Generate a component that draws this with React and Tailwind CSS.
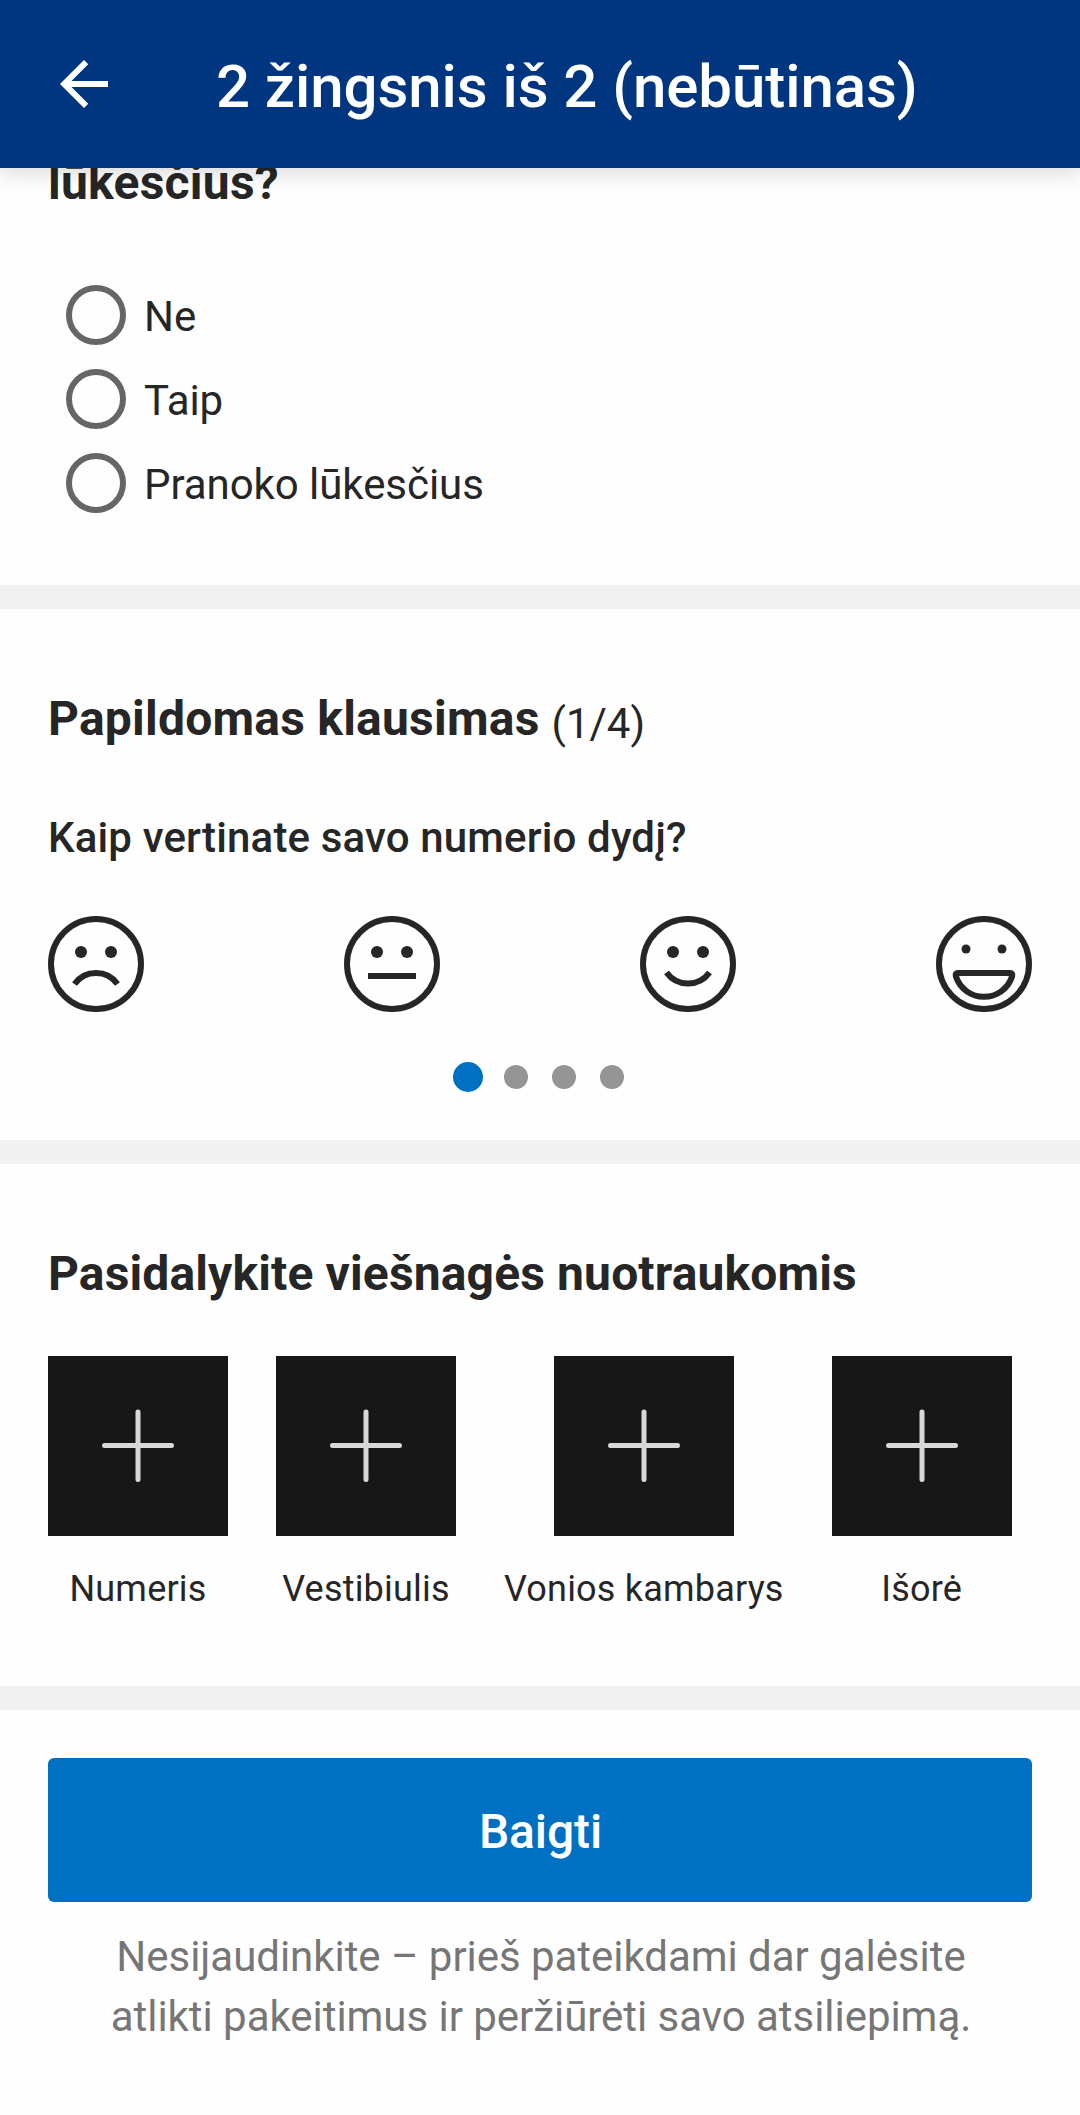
import { useState } from 'react';

const expectations = ['Ne', 'Taip', 'Pranoko lūkesčius'];

const photoSlots = ['Numeris', 'Vestibiulis', 'Vonios kambarys', 'Išorė'];

function Face({ children }) {
  return (
    <button className="block">
      <svg width="96" height="96" viewBox="0 0 96 96" fill="none" stroke="#262626" strokeWidth="6">
        <circle cx="48" cy="48" r="45" />
        {children}
      </svg>
    </button>
  );
}

function Eyes() {
  return (
    <g fill="#262626" stroke="none">
      <circle cx="33" cy="36" r="6" />
      <circle cx="63" cy="36" r="6" />
    </g>
  );
}

export default function App() {
  const [selected, setSelected] = useState(null);

  return (
    <div className="flex h-[2115px] w-[1080px] flex-col overflow-hidden bg-[#fefefe] font-['Roboto',sans-serif] text-[#262626]">
      <header className="z-10 flex h-[168px] shrink-0 items-center bg-[#003580] pl-12 text-white shadow-[0_4px_20px_rgba(0,0,0,0.16)]">
        <button>
          <svg width="72" height="72" viewBox="0 0 24 24" fill="currentColor">
            <path d="M20 11H7.83l5.59-5.59L12 4l-8 8 8 8 1.41-1.41L7.83 13H20v-2z" />
          </svg>
        </button>
        <h1 className="ml-24 pt-1.5 text-[60px] leading-[70px] font-medium tracking-[-0.07px]">2 žingsnis iš 2 (nebūtinas)</h1>
      </header>

      <section className="h-[417px] shrink-0 px-12">
        <h2 className="-mt-[13px] text-[48px] leading-[56px] font-bold tracking-[0.25px]">lūkesčius?</h2>
        <div className="mt-[62px] pl-[18px]">
          {expectations.map((label) => (
            <label key={label} className="flex h-[84px] items-center" onClick={() => setSelected(label)}>
              <span className="flex size-[60px] items-center justify-center rounded-full border-[6px] border-[#666666]">
                {selected === label && <span className="size-[30px] rounded-full bg-[#0071c2]" />}
              </span>
              <span className="ml-[18px] pt-[3px] text-[42px] leading-[50px] tracking-[-0.06px]">{label}</span>
            </label>
          ))}
        </div>
      </section>

      <div className="h-6 shrink-0 bg-[#f1f1f1]" />

      <section className="h-[531px] shrink-0 px-12 pt-[82px]">
        <div className="flex">
          <h2 className="text-[48px] leading-[56px] font-bold tracking-[0.23px]">Papildomas klausimas</h2>
          <span className="ml-3 pt-[8px] text-[42px] leading-[50px]">(1/4)</span>
        </div>
        <p className="mt-[64px] text-[42px] leading-[50px] font-medium tracking-[0.15px]">Kaip vertinate savo numerio dydį?</p>
        <div className="mt-[53px] flex justify-between">
          <Face>
            <Eyes />
            <path d="M26.5 68A26.5 26.5 0 0 1 69.5 68" />
          </Face>
          <Face>
            <Eyes />
            <path d="M24 60H72" />
          </Face>
          <Face>
            <Eyes />
            <path d="M26.5 56.5A26.5 26.5 0 0 0 69.5 56.5" />
          </Face>
          <Face>
            <g fill="#262626" stroke="none">
              <circle cx="30" cy="33" r="4.5" />
              <circle cx="66" cy="33" r="4.5" />
            </g>
            <path d="M19.8 60Q19 57 22 57H74Q77 57 76.2 60A29.5 29.5 0 0 1 19.8 60Z" />
          </Face>
        </div>
        <div className="mt-[50px] flex items-center justify-center gap-6 pr-[3px]">
          <span className="-mr-[3px] size-[30px] rounded-full bg-[#0071c2]" />
          <span className="size-6 rounded-full bg-[#949494]" />
          <span className="size-6 rounded-full bg-[#949494]" />
          <span className="size-6 rounded-full bg-[#949494]" />
        </div>
      </section>

      <div className="h-6 shrink-0 bg-[#f1f1f1]" />

      <section className="h-[522px] shrink-0 px-12 pt-[82px]">
        <h2 className="text-[48px] leading-[56px] font-bold tracking-[0.14px]">Pasidalykite viešnagės nuotraukomis</h2>
        <div className="mt-[54px] flex gap-12">
          {photoSlots.map((slot) => (
            <button key={slot} className="flex min-w-[180px] flex-col items-center">
              <span className="flex size-[180px] items-center justify-center bg-[#171717]">
                <svg width="76" height="76" viewBox="0 0 76 76" stroke="#d8d8d8" strokeWidth="5" strokeLinecap="round">
                  <path d="M4.5 37.5H71.5M38 4V71.5" />
                </svg>
              </span>
              <span className="mt-8 text-[36px] leading-[42px] tracking-[0.2px] whitespace-nowrap">{slot}</span>
            </button>
          ))}
        </div>
      </section>

      <div className="h-6 shrink-0 bg-[#f1f1f1]" />

      <footer className="px-12 pt-12 text-center">
        <button className="block h-36 w-full rounded-[6px] bg-[#0071c2] pt-1 pl-px text-[48px] font-medium tracking-[-0.1px] text-white">
          Baigti
        </button>
        <p className="mt-[25px] pl-[2px] text-[42px] leading-[60px] tracking-[-0.04px] text-[#767676]">
          Nesijaudinkite – prieš pateikdami dar galėsite
          <br />
          atlikti pakeitimus ir peržiūrėti savo atsiliepimą.
        </p>
      </footer>
    </div>
  );
}
